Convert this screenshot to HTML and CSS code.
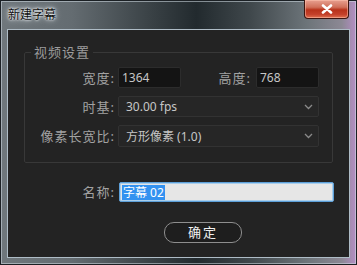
FILE: index.html
```html
<!DOCTYPE html>
<html>
<head>
<meta charset="utf-8">
<link rel="stylesheet" href="styles.css">
</head>
<body>
<div class="window">
  <div class="titlebar">
    <span class="title">新建字幕</span>
    <div class="close">
      <svg width="14" height="10" viewBox="0 0 14 10"><path d="M3 1.5 L11 8.5 M11 1.5 L3 8.5" stroke="#ffffff" stroke-width="2.6" stroke-linecap="round"/></svg>
    </div>
  </div>
  <div class="client">
    <fieldset class="group">
      <legend class="legend">视频设置</legend>
      <div class="row">
        <span class="label">宽度:</span>
        <div class="field small">1364</div>
        <span class="label label2">高度:</span>
        <div class="field small">768</div>
      </div>
      <div class="row">
        <span class="label">时基:</span>
        <div class="select">30.00 fps<svg class="chev" width="9" height="6" viewBox="0 0 9 6"><path d="M1 1 L4.5 4.5 L8 1" fill="none" stroke="#8a8a8a" stroke-width="1.3"/></svg></div>
      </div>
      <div class="row">
        <span class="label">像素长宽比:</span>
        <div class="select tall">方形像素 (1.0)<svg class="chev" width="9" height="6" viewBox="0 0 9 6"><path d="M1 1 L4.5 4.5 L8 1" fill="none" stroke="#8a8a8a" stroke-width="1.3"/></svg></div>
      </div>
    </fieldset>
    <div class="namerow">
      <span class="label namelabel">名称:</span>
      <div class="nameinput"><span class="sel">字幕 02</span></div>
    </div>
    <div class="btnrow">
      <div class="btn">确定</div>
    </div>
  </div>
</div>
</body>
</html>
```
FILE: styles.css
```css
html, body {
  margin: 0;
  padding: 0;
  background: #2a3034;
}
body {
  width: 357px;
  height: 265px;
  overflow: hidden;
  font-family: "Noto Sans", "Noto Sans CJK SC", sans-serif;
}
.window {
  width: 357px;
  height: 265px;
  box-sizing: border-box;
  border: 1px solid #1b2024;
  box-shadow: inset 0 0 0 1px rgba(210, 220, 228, 0.55);
  background: linear-gradient(to right, #6f777c 0%, #646c71 20%, #3a4246 42%, #222a2e 55%, #3f474b 70%, #6c7479 86%, #8c8894 96%, #b48ec4 100%);
  display: flex;
  flex-direction: column;
  padding: 0 6px 6px 6px;
}
.titlebar {
  height: 28px;
  display: flex;
  align-items: flex-start;
}
.title {
  margin-top: 6px;
  margin-left: 1px;
  font-size: 12px;
  line-height: 16px;
  color: #101010;
  text-shadow: 0 0 6px #e8eef2, 0 0 3px #e8eef2, 0 0 2px #ffffff;
}
.close {
  margin-left: auto;
  margin-right: 1px;
  margin-top: -1px;
  width: 45px;
  height: 19px;
  box-sizing: border-box;
  border: 1px solid #3b1410;
  border-top: none;
  border-radius: 0 0 4px 4px;
  background: linear-gradient(to bottom, #e8a090 0%, #d0705a 40%, #b8321a 55%, #c4402a 80%, #e07050 100%);
  box-shadow: inset 0 0 0 1px rgba(255, 200, 180, 0.5);
  display: flex;
  align-items: center;
  justify-content: center;
}
.client {
  flex: 1;
  border: 1px solid #aebcc6;
  background: #232323;
  position: relative;
  display: flex;
  flex-direction: column;
}
.group {
  margin: 15px 16px 0 16px;
  padding: 8px 0 13px 0;
  border: 1px solid #383838;
  border-radius: 2px;
  display: flex;
  flex-direction: column;
  gap: 8px;
  height: 118px;
  box-sizing: border-box;
}
.legend {
  margin-left: 6px;
  padding: 0 3px;
  font-size: 13px;
  line-height: 14px;
  color: #9c9c9c;
  letter-spacing: 1px;
}
.row {
  display: flex;
  align-items: center;
}
.label {
  width: 93px;
  text-align: right;
  font-size: 13px;
  color: #a2a2a2;
  padding-right: 3px;
  box-sizing: border-box;
  line-height: 16px;
  letter-spacing: 1px;
}
.label2 {
  width: 75px;
  padding-right: 5px;
}
.namelabel {
  width: 110px;
}
.field {
  height: 21px;
  box-sizing: border-box;
  background: #141414;
  border: 1px solid #2c2c2c;
  border-radius: 2px;
  color: #c6c6c6;
  font-size: 12px;
  line-height: 19px;
  padding-left: 3px;
}
.small {
  width: 63px;
}
.select {
  width: 201px;
  height: 21px;
  box-sizing: border-box;
  background: #262626;
  border: 1px solid #323232;
  border-radius: 2px;
  color: #c6c6c6;
  font-size: 12px;
  line-height: 19px;
  padding-left: 7px;
  display: flex;
  align-items: center;
}
.tall {
  height: 22px;
}
.chev {
  margin-left: auto;
  margin-right: 5px;
}
.namerow {
  display: flex;
  align-items: center;
  margin-top: 19px;
}
.nameinput {
  margin-left: 1px;
  width: 215px;
  height: 20px;
  box-sizing: border-box;
  background: #e6e6e6;
  border: 1px solid #5c9fd8;
  box-shadow: inset 0 0 0 1px #a8cdea;
  border-radius: 2px;
  padding: 2px 0 0 2px;
  display: flex;
}
.sel {
  background: #3392f0;
  color: #ffffff;
  font-size: 12px;
  line-height: 15px;
  height: 15px;
  padding: 0 1px;
}
.btnrow {
  display: flex;
  margin-top: 20px;
  padding-left: 156px;
}
.btn {
  width: 78px;
  height: 21px;
  box-sizing: border-box;
  border: 1px solid #8e8e8e;
  border-radius: 10px;
  background: #1e1e1e;
  color: #f0f0f0;
  font-size: 13px;
  line-height: 19px;
  text-align: center;
  letter-spacing: 2px;
}
```
